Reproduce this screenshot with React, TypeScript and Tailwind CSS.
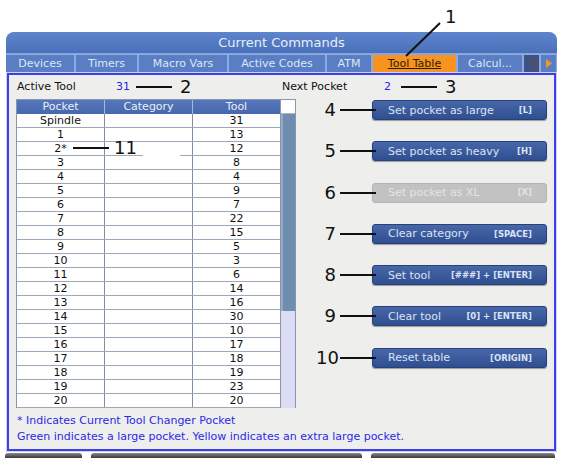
import React from "react";

const rows: [string, string][] = [
  ["Spindle", "31"], ["1", "13"], ["2*", "12"], ["3", "8"], ["4", "4"], ["5", "9"], ["6", "7"],
  ["7", "22"], ["8", "15"], ["9", "5"], ["10", "3"], ["11", "6"], ["12", "14"], ["13", "16"],
  ["14", "30"], ["15", "10"], ["16", "17"], ["17", "18"], ["18", "19"], ["19", "23"], ["20", "20"],
];

const buttons: { n: string; label: string; keys: string; disabled?: boolean }[] = [
  { n: "4", label: "Set pocket as large", keys: "[L]" },
  { n: "5", label: "Set pocket as heavy", keys: "[H]" },
  { n: "6", label: "Set pocket as XL", keys: "[X]", disabled: true },
  { n: "7", label: "Clear category", keys: "[SPACE]" },
  { n: "8", label: "Set tool", keys: "[###] + [ENTER]" },
  { n: "9", label: "Clear tool", keys: "[0] + [ENTER]" },
  { n: "10", label: "Reset table", keys: "[ORIGIN]" },
];

const tabs: { label: string; w: string; active?: boolean }[] = [
  { label: "Devices", w: "w-[68px]" },
  { label: "Timers", w: "w-[61px]" },
  { label: "Macro Vars", w: "w-[88px]" },
  { label: "Active Codes", w: "w-[96px]" },
  { label: "ATM", w: "w-[44px]" },
  { label: "Tool Table", w: "w-[83px]", active: true },
  { label: "Calcul...", w: "w-[64px]" },
];

export default function App() {
  return (
    <div className="relative w-[562px] h-[458px] overflow-hidden bg-white font-['DejaVu_Sans',sans-serif] text-[11px] text-[#111]">
      <div className="h-[32px]" />
      <div className="ml-[6px] w-[551px] rounded-t-[8px] overflow-hidden bg-[#cfd5df]">
        <div className="h-[22px] bg-gradient-to-b from-[#5e85cc] to-[#4970ba] flex items-center justify-center text-[13px] leading-none text-[#e8eefa] border-b border-[#88a4d8]">
          Current Commands
        </div>
        <div className="h-[18px] bg-[#8faade] pt-[1px] flex gap-[2px]">
          {tabs.map((t) => (
            <div
              key={t.label}
              className={
                t.active
                  ? `${t.w} h-full flex items-center justify-center bg-[#f7931e] text-[#2a1d08] underline leading-none`
                  : `${t.w} h-full flex items-center justify-center bg-[#5a7ec3] text-[#dde6f7] leading-none`
              }
            >
              {t.label}
            </div>
          ))}
          <div className="w-[15px] h-full flex items-center justify-center bg-[#3d5386]">
            <svg width="6" height="9" viewBox="0 0 6 9"><polygon points="6,0 6,9 0,4.5" fill="#5b4a58" /></svg>
          </div>
          <div className="w-[15px] h-full flex items-center justify-center bg-[#5a7ec3]">
            <svg width="6" height="9" viewBox="0 0 6 9"><polygon points="0,0 0,9 6,4.5" fill="#f4981c" /></svg>
          </div>
        </div>
        <div className="p-[1px]">
          <div className="h-[378px] border-2 border-[#3c3cf0] bg-[#eeeeec] pl-[7px] pt-[5px]">
            {/* info row */}
            <div className="h-[14px] ml-[1px] flex items-center leading-[14px]">
              <span className="w-[99px]">Active Tool</span>
              <span className="w-[20px] text-[#2525e6]">31</span>
              <div className="w-[146px] flex items-center">
                <div className="w-[36px] h-[2px] bg-[#111]" />
                <span className="ml-[8px] text-[18px] leading-[18px]">2</span>
              </div>
              <span className="w-[102px]">Next Pocket</span>
              <span className="w-[17px] text-[#2525e6]">2</span>
              <div className="w-[36px] h-[2px] bg-[#111]" />
              <span className="ml-[8px] text-[18px] leading-[18px]">3</span>
            </div>
            {/* main row */}
            <div className="mt-[5px] flex items-start">
              <div className="w-[280px] flex border-l border-t border-r border-[#8797ae]">
                <div className="w-[263px]">
                  <div className="h-[14px] flex bg-gradient-to-b from-[#5576bb] to-[#4868ad] text-[#e8eef9] leading-[14px]">
                    <div className="w-[88px] text-center border-r border-[#a6b6d6]">Pocket</div>
                    <div className="w-[88px] text-center border-r border-[#a6b6d6]">Category</div>
                    <div className="w-[87px] text-center">Tool</div>
                  </div>
                  {rows.map(([p, t]) => (
                    <div key={p} className="h-[14px] flex bg-white border-b border-[#9ea8ba] leading-[13px]">
                      <div className="w-[88px] text-center border-r border-[#7f8da6]">{p}</div>
                      <div className="w-[88px] border-r border-[#7f8da6]" />
                      <div className="w-[87px] text-center">{t}</div>
                    </div>
                  ))}
                </div>
                <div className="w-[15px] flex flex-col border-l border-[#8797ae]">
                  <div className="h-[14px] bg-white border-b border-[#a9b3c4]" />
                  <div className="h-[197px] bg-[#6f8dae] border-l-2 border-[#93a9c4]" />
                  <div className="flex-1 bg-[#dcdcf5]" />
                </div>
              </div>
              <div className="ml-[20px] pt-[1px] flex flex-col gap-[21.3px]">
                {buttons.map((b) => (
                  <div key={b.n} className="h-[20px] flex items-center">
                    <span className="w-[20px] text-right text-[18px] leading-[18px]">{b.n}</span>
                    <div className="relative z-10 ml-[4px] -mr-[4px] w-[36px] h-[2px] bg-[#111]" />
                    <div
                      className={
                        b.disabled
                          ? "w-[175px] h-[20px] flex items-center justify-between pl-[15px] pr-[14px] rounded-[3px] bg-[#c2c2c2] border border-[#b4b4b4] text-[#e4e4e4]"
                          : "w-[175px] h-[20px] flex items-center justify-between pl-[15px] pr-[14px] rounded-[3px] bg-gradient-to-b from-[#4767a8] to-[#2f4f90] border border-[#26417b] text-[#dae3f5] shadow-[0_1px_1px_rgba(0,0,0,0.35)]"
                      }
                    >
                      <span className="leading-none">{b.label}</span>
                      <span className="font-bold text-[8.5px] leading-none">{b.keys}</span>
                    </div>
                  </div>
                ))}
              </div>
            </div>
            {/* footer */}
            <div className="mt-[5px] ml-[1px] leading-[16px] text-[#2a2ae8]">
              <div>* Indicates Current Tool Changer Pocket</div>
              <div>Green indicates a large pocket. Yellow indicates an extra large pocket.</div>
            </div>
          </div>
        </div>
      </div>
      <div className="mt-[1px] h-[5px] flex">
        <div className="ml-[5px] w-[77px] rounded-t-[3px] bg-gradient-to-b from-[#8a8a8a] to-[#3a3a3a]" />
        <div className="ml-[9px] w-[271px] rounded-t-[3px] bg-gradient-to-b from-[#8a8a8a] to-[#3a3a3a]" />
        <div className="ml-[9px] w-[184px] rounded-t-[3px] bg-gradient-to-b from-[#8a8a8a] to-[#3a3a3a]" />
      </div>

      {/* annotation 1 */}
      <span className="absolute left-[445px] top-[8px] text-[18px] leading-[18px]">1</span>
      <svg className="absolute left-[400px] top-[20px]" width="45" height="40" viewBox="0 0 45 40">
        <line x1="40" y1="3" x2="6" y2="36" stroke="#111" strokeWidth="2" />
      </svg>
      {/* annotation 11 */}
      <div className="absolute left-[143px] top-[155px] w-[37px] h-[3px] bg-white" />
      <div className="absolute left-[73px] top-[147px] w-[36px] h-[2px] bg-[#111]" />
      <span className="absolute left-[114px] top-[139px] text-[18px] leading-[18px]">11</span>
    </div>
  );
}
